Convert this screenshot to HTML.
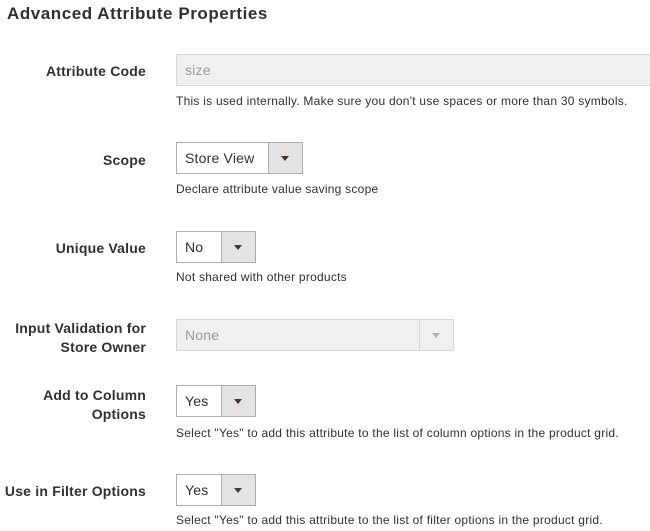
<!DOCTYPE html>
<html><head><style>
body{margin:0;width:650px;height:531px;background:#fff;font-family:"Liberation Sans",sans-serif;color:#303030;position:relative;overflow:hidden}
h1{position:absolute;left:7px;top:4px;margin:0;font-size:17px;font-weight:bold;color:#303030;letter-spacing:0.55px}
.l{position:absolute;right:504px;font-size:14px;font-weight:bold;text-align:right;line-height:19px;color:#303030;letter-spacing:0.2px}
.h{position:absolute;left:176px;font-size:12px;color:#303030;white-space:nowrap;letter-spacing:0.25px}
.s{position:absolute;left:176px;height:30px;border:1px solid #adadad;background:#fff;font-size:14px;box-sizing:content-box;letter-spacing:0.2px}
.s span{position:absolute;left:8px;top:7px}
.s i{position:absolute;right:0;top:0;width:33px;height:30px;background:#e3e3e3;border-left:1px solid #adadad}
.s i:after{content:"";position:absolute;left:12px;top:13px;border-left:4px solid transparent;border-right:4px solid transparent;border-top:5px solid #41362f}
.d{background:#f0f0f0;border-color:#d6d6d6;color:#999}
.d i{background:#f0f0f0;border-left-color:#d6d6d6}
.d i:after{border-top-color:#b0b0b0}
</style></head><body>
<h1>Advanced Attribute Properties</h1>

<div class="l" style="top:62px">Attribute Code</div>
<div class="s d" style="top:54px;width:480px"><span>size</span></div>
<div class="h" style="top:94px">This is used internally. Make sure you don't use spaces or more than 30 symbols.</div>

<div class="l" style="top:151px">Scope</div>
<div class="s" style="top:142px;width:125px"><span>Store View</span><i></i></div>
<div class="h" style="top:182px">Declare attribute value saving scope</div>

<div class="l" style="top:239px">Unique Value</div>
<div class="s" style="top:231px;width:78px"><span>No</span><i></i></div>
<div class="h" style="top:270px">Not shared with other products</div>

<div class="l" style="top:319px">Input Validation for<br>Store Owner</div>
<div class="s d" style="top:319px;width:276px"><span>None</span><i></i></div>

<div class="l" style="top:386px">Add to Column<br>Options</div>
<div class="s" style="top:385px;width:78px"><span>Yes</span><i></i></div>
<div class="h" style="top:426px">Select "Yes" to add this attribute to the list of column options in the product grid.</div>

<div class="l" style="top:482px">Use in Filter Options</div>
<div class="s" style="top:474px;width:78px"><span>Yes</span><i></i></div>
<div class="h" style="top:513px">Select "Yes" to add this attribute to the list of filter options in the product grid.</div>
</body></html>
